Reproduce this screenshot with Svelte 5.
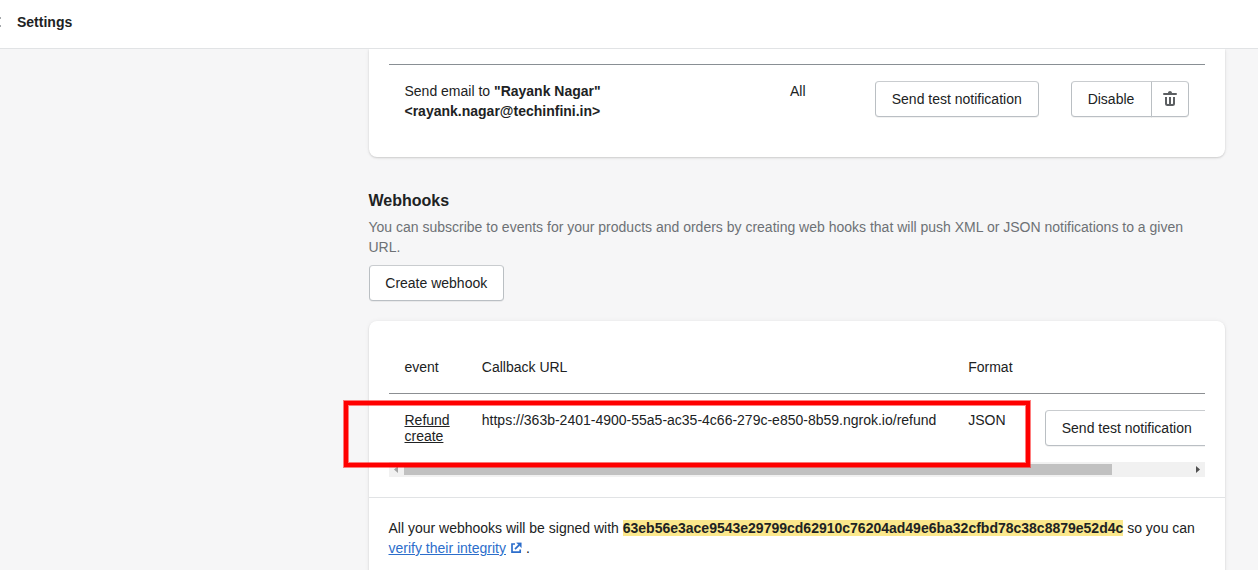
<script>
  const token = '63eb56e3ace9543e29799cd62910c76204ad49e6ba32cfbd78c38c8879e52d4c';
  const hook = {
    event: 'Refund create',
    url: 'https://363b-2401-4900-55a5-ac35-4c66-279c-e850-8b59.ngrok.io/refund',
    format: 'JSON'
  };
</script>

<div class="page">
  <header>
    <svg class="edge" width="2" height="12" viewBox="0 0 2 12"><path d="M0 1h1v2H0zM0 9h1v2H0z" fill="#a5a8ab" /></svg>
    <h1>Settings</h1>
  </header>

  <main>
    <section class="card notifications">
      <div class="row">
        <div class="recipient">Send email to <b>"Rayank Nagar"<br />&lt;rayank.nagar@techinfini.in&gt;</b></div>
        <div class="scope">All</div>
        <button class="test">Send test notification</button>
        <div class="group">
          <button class="disable">Disable</button>
          <button class="trash" aria-label="Delete">
            <svg width="20" height="20" viewBox="0 0 20 20" fill="#5c5f62">
              <path d="M8 4c0-1.1.9-2 2-2s2 .9 2 2h4a1 1 0 0 1 1 1 1 1 0 0 1-1 1H4a1 1 0 0 1-1-1 1 1 0 0 1 1-1h4zM5 14.5V8h2v6.5c0 .3.2.5.5.5H9V8h2v7h1.500c.3 0 .5-.2.5-.5V8h2v6.500A2.500 2.500 0 0 1 12.500 17h-5A2.500 2.500 0 0 1 5 14.500z" />
            </svg>
          </button>
        </div>
      </div>
    </section>

    <section class="intro">
      <h2>Webhooks</h2>
      <p>You can subscribe to events for your products and orders by creating web hooks that will push XML or JSON notifications to a given URL.</p>
      <button class="create">Create webhook</button>
    </section>

    <section class="card hooks">
      <div class="table">
        <div class="grid head">
          <span>event</span><span>Callback URL</span><span>Format</span>
        </div>
        <div class="grid body">
          <a class="event" href="#refund">{hook.event}</a>
          <span>{hook.url}</span>
          <span>{hook.format}</span>
          <button class="test">Send test notification</button>
        </div>
        <div class="scrollbar">
          <svg width="15" height="15" viewBox="0 0 15 15"><path d="M9 4v7L5 7.500z" fill="#a3a3a3" /></svg>
          <div class="track"><div class="thumb"></div></div>
          <svg width="15" height="15" viewBox="0 0 15 15"><path d="M6 4v7L10 7.500z" fill="#505050" /></svg>
        </div>
      </div>
      <div class="foot">
        All your webhooks will be signed with <mark>{token}</mark> so you can
        <a href="#verify">verify their integrity<svg class="ext" width="20" height="20" viewBox="0 0 20 20">
          <path d="M9 6H6v8.200h8.200V11.500M9 11.200l4-4" fill="none" stroke="#2c6ecb" stroke-width="1.700" />
          <path d="M10.500 4.800h4.900v4.900z" fill="#2c6ecb" stroke="#2c6ecb" stroke-width=".3" stroke-linejoin="round" />
        </svg></a>.
      </div>
    </section>
  </main>
  <div class="highlight"></div>
</div>

<style>
  :global(body) { margin: 0; background: #f6f6f7; overflow: hidden; }
  .page {
    position: relative;
    height: 570px;
    overflow: hidden;
    font: 14px/20px "Liberation Sans", Arial, sans-serif;
    color: #202223;
  }
  header {
    height: 48px;
    display: flex;
    align-items: center;
    background: #fff;
    border-bottom: 1px solid #e1e3e5;
  }
  .edge { margin: -4px 15px 0 0; }
  h1 { margin: -4px 0 0; font: inherit; font-weight: 700; }
  main { width: 856.5px; margin-left: 368.5px; }
  .card { background: #fff; box-shadow: 0 0 5px rgba(23, 24, 24, .05), 0 1px 2px rgba(0, 0, 0, .15); }
  .notifications {
    height: 108px;
    box-sizing: border-box;
    padding: 15px 20px 0;
    border-radius: 0 0 8px 8px;
    clip-path: inset(0 -10px -10px);
  }
  .row {
    display: flex;
    align-items: flex-start;
    border-top: 1px solid #898f94;
    padding: 16px 16px 0;
  }
  .recipient { width: 230px; margin-right: 155.5px; }
  .scope { width: 85px; }
  .group { display: flex; margin-left: 32px; }
  button {
    box-sizing: border-box;
    height: 36px;
    padding: 0;
    border: 1px solid #babfc3;
    border-top-color: #c9cccf;
    border-bottom-color: #babfc4;
    border-radius: 4px;
    background: #fff;
    color: #202223;
    font: inherit;
    box-shadow: 0 1px 0 rgba(0, 0, 0, .05);
    white-space: nowrap;
  }
  .test { width: 163.5px; flex: none; }
  .disable { width: 81px; padding-right: 1px; border-radius: 4px 0 0 4px; }
  .trash {
    width: 38px;
    margin-left: -1px;
    border-radius: 0 4px 4px 0;
    display: flex;
    align-items: center;
    justify-content: center;
  }
  .group { margin-left: 32.5px; }
  .intro { padding: 32px 0 20px; }
  h2 { margin: 0 0 4px; font-size: 16px; line-height: 24px; }
  p { margin: 0 0 8px; padding-right: 20px; color: #6d7175; }
  .create { width: 135.5px; display: block; }
  .hooks { border-radius: 8px; height: 280px; }
  .table { padding: 36px 20px 20px; border-bottom: 1px solid #e1e3e5; }
  .grid {
    display: grid;
    grid-template-columns: 77.3px 486.4px 76.800px 164px;
    padding-left: 16px;
    overflow: hidden;
  }
  .head { height: 36px; border-bottom: 1px solid #8c8f92; }
  .body { height: 52px; padding-top: 16px; line-height: 20px; align-items: start; }
  .event { width: 50px; line-height: 16px; margin-top: 2px; color: inherit; text-decoration: underline; }
  .scrollbar { height: 15px; display: flex; background: #f1f1f1; }
  .scrollbar svg { flex: none; }
  .track { flex: 1; padding: 2px 0; }
  .thumb { width: 90.1%; height: 11px; background: #c1c1c1; }
  .foot { padding: 20px; }
  mark { font-weight: 700; color: inherit; background: #fbe88c; }
  .foot a { color: #2c6ecb; }
  .ext { vertical-align: -5px; }
  .highlight {
    position: absolute;
    left: 343px;
    top: 400px;
    width: 688px;
    height: 68px;
    box-sizing: border-box;
    border: 1px solid rgba(255, 0, 0, .5);
  }
  .highlight::before {
    content: "";
    position: absolute;
    inset: 0;
    border: 4px solid #f00;
  }
  .highlight::after {
    content: "";
    position: absolute;
    inset: 4px;
    border: 1px solid rgba(255, 0, 0, .5);
  }
</style>
